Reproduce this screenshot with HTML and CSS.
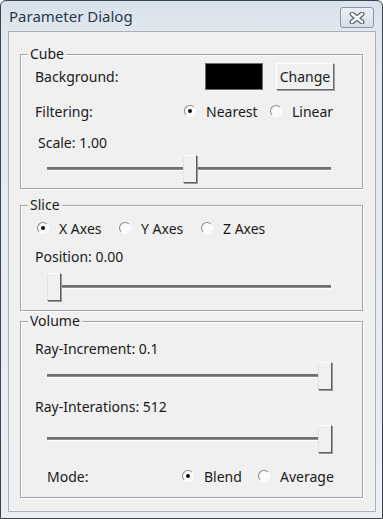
FILE: index.html
```html
<!DOCTYPE html>
<html lang="en">
<head>
    <meta charset="UTF-8">
    <title>Parameter Dialog</title>
    <link rel="stylesheet" href="styles.css">
</head>
<body>
    <div class="window">
        <div class="titlebar">
            <span class="title">Parameter Dialog</span>
            <button class="close-btn" aria-label="Close">
                <svg width="16" height="12" viewBox="0 0 16 12">
                    <path d="M3 2 L13 10 M13 2 L3 10" stroke="#5a6472" stroke-width="5" stroke-linecap="round"/>
                    <path d="M3 2 L13 10 M13 2 L3 10" stroke="#ffffff" stroke-width="2.6" stroke-linecap="round"/>
                </svg>
            </button>
        </div>
        <div class="client">
            <div class="group group-cube">
                <span class="group-title">Cube</span>
                <div class="row row-bg">
                    <span class="label label-bg">Background:</span>
                    <span class="swatch"></span>
                    <button class="btn">Change</button>
                </div>
                <div class="row row-filter">
                    <span class="label label-wide">Filtering:</span>
                    <span class="radio filter-opt checked"><i class="dot"></i>Nearest</span>
                    <span class="radio"><i class="dot"></i>Linear</span>
                </div>
                <div class="row row-text scale-label">Scale: 1.00</div>
                <div class="slider slider-cube">
                    <div class="track"></div>
                    <div class="thumb" style="left: 136px"></div>
                </div>
            </div>

            <div class="group group-slice">
                <span class="group-title">Slice</span>
                <div class="row row-axes">
                    <span class="radio axis-opt checked"><i class="dot"></i>X Axes</span>
                    <span class="radio axis-opt"><i class="dot"></i>Y Axes</span>
                    <span class="radio axis-opt"><i class="dot"></i>Z Axes</span>
                </div>
                <div class="row row-text pos-label">Position: 0.00</div>
                <div class="slider slider-pos">
                    <div class="track"></div>
                    <div class="thumb" style="left: 0px"></div>
                </div>
            </div>

            <div class="group group-volume">
                <span class="group-title">Volume</span>
                <div class="row row-text inc-label">Ray-Increment: 0.1</div>
                <div class="slider slider-inc">
                    <div class="track"></div>
                    <div class="thumb" style="left: 271px"></div>
                </div>
                <div class="row row-text iter-label">Ray-Interations: 512</div>
                <div class="slider slider-iter">
                    <div class="track"></div>
                    <div class="thumb" style="left: 271px"></div>
                </div>
                <div class="row row-mode">
                    <span class="label label-mode">Mode:</span>
                    <span class="radio mode-opt checked"><i class="dot"></i>Blend</span>
                    <span class="radio"><i class="dot"></i>Average</span>
                </div>
            </div>
        </div>
    </div>
</body>
</html>
```

FILE: styles.css
```css
body {
    margin: 0;
    padding: 0;
    background: #ffffff;
    font-family: "Noto Sans", "Open Sans", sans-serif;
    font-size: 14px;
    color: #1a1a1a;
}
.window {
    width: 383px;
    height: 519px;
    box-sizing: border-box;
    border: 1px solid #3f444b;
    border-radius: 6px 6px 0 0;
    background: linear-gradient(#d8e2ec, #e3e9ef 40px, #eceff2);
    padding: 0 6px 6px 7px;
    display: flex;
    flex-direction: column;
}
.titlebar {
    height: 30px;
    display: flex;
    align-items: center;
    justify-content: space-between;
    padding: 0 2px 0 1px;
}
.title {
    font-size: 15px;
    color: #2a3a4c;
}
.close-btn {
    width: 34px;
    height: 21px;
    margin-top: 3px;
    padding: 0;
    border: 1px solid #8695a7;
    border-radius: 3px;
    background: linear-gradient(#edf1f6, #d6dee8);
    display: flex;
    align-items: center;
    justify-content: center;
}
.client {
    flex: 1;
    background: #f0f0f0;
    border: 1px solid #a8b2bd;
    padding: 0 12px 0 11px;
}
.group {
    position: relative;
    box-sizing: border-box;
    border: 1px solid #a3a3a3;
    box-shadow: inset 1px 1px 0 #ffffff, 1px 1px 0 #ffffff;
    display: flex;
    flex-direction: column;
}
.group-title {
    position: absolute;
    top: -10px;
    left: 7px;
    padding: 0 2px;
    line-height: 18px;
    background: #f0f0f0;
}
.group-cube {
    margin-top: 22px;
    height: 135px;
}
.group-slice {
    margin-top: 16px;
    height: 106px;
}
.group-volume {
    margin-top: 10px;
    height: 177px;
}
.row {
    display: flex;
    align-items: center;
    padding-left: 14px;
}
.row-text {
    height: 20px;
}
.label-bg {
    width: 170px;
}
.label-wide {
    width: 149px;
}
.label-mode {
    width: 135px;
}
.row-bg {
    margin-top: 7px;
    height: 28px;
}
.swatch {
    width: 56px;
    height: 25px;
    background: #000;
    border: 1px solid #6d6d6d;
}
.btn {
    width: 58px;
    height: 27px;
    margin-left: 13px;
    padding: 0;
    font: inherit;
    color: inherit;
    background: #f0f0f0;
    border: 1px solid;
    border-color: #ffffff #6a6a6a #6a6a6a #ffffff;
    box-shadow: 1px 1px 0 #a0a0a0;
}
.row-filter {
    margin-top: 8px;
    height: 26px;
}
.scale-label {
    margin-top: 8px;
    padding-left: 17px;
}
.radio {
    display: flex;
    align-items: center;
}
.dot {
    width: 10px;
    height: 10px;
    margin-right: 10px;
    border-radius: 50%;
    border: 1px solid;
    border-color: #8a8a8a #ffffff #ffffff #8a8a8a;
    background: #fbfbfb;
    display: flex;
    align-items: center;
    justify-content: center;
}
.checked .dot::after {
    content: "";
    width: 4px;
    height: 4px;
    border-radius: 50%;
    background: #111;
}
.filter-opt {
    width: 86px;
}
.mode-opt {
    width: 76px;
}
.axis-opt {
    width: 82px;
}
.row-axes {
    margin-top: 12px;
    height: 20px;
    padding-left: 16px;
}
.pos-label {
    margin-top: 8px;
}
.slider {
    position: relative;
    width: 286px;
    height: 29px;
    margin-left: 26px;
}
.track {
    position: absolute;
    left: 0;
    right: 2px;
    top: 12px;
    height: 1px;
    background: #8c8c8c;
    border-top: 2px solid #6f6f6f;
    border-bottom: 1px solid #ffffff;
}
.thumb {
    position: absolute;
    top: 0;
    width: 12px;
    height: 26px;
    background: #f0f0f0;
    border: 1px solid;
    border-color: #ffffff #5f5f5f #5f5f5f #e3e3e3;
    box-shadow: 1px 1px 0 #9a9a9a;
}
.slider-cube {
    margin-top: 3px;
}
.slider-pos {
    margin-top: 7px;
}
.inc-label {
    margin-top: 16px;
}
.slider-inc {
    margin-top: 4px;
}
.iter-label {
    margin-top: 5px;
}
.slider-iter {
    margin-top: 9px;
}
.row-mode {
    margin-top: 12px;
    height: 20px;
    padding-left: 26px;
}
```
